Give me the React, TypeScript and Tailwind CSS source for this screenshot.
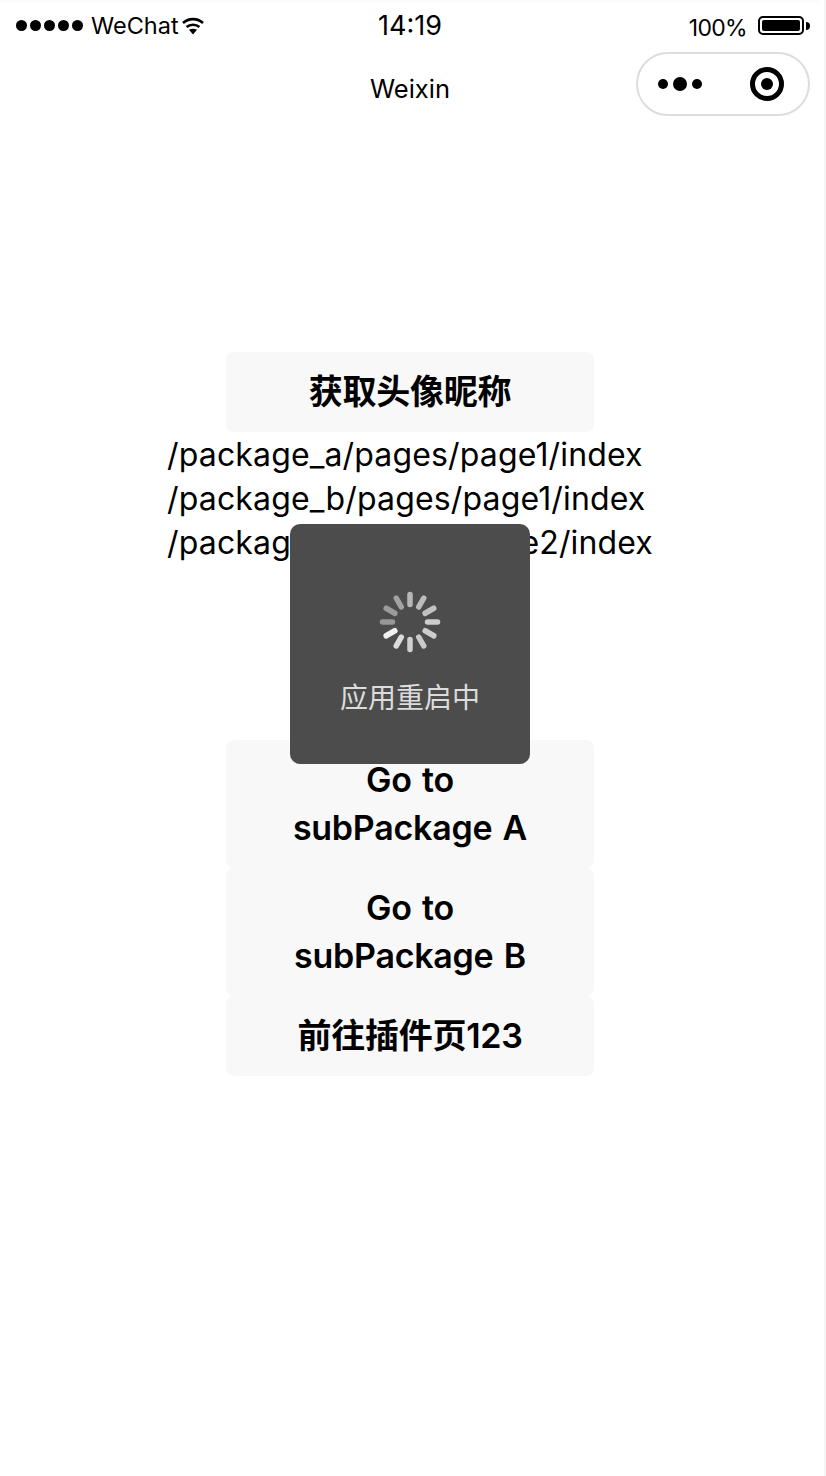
const cjk = "font-['Inter','Noto_Sans_CJK_SC',sans-serif]";

const ticks = [
  { a: 0, o: 0.6 },
  { a: 30, o: 0.62 },
  { a: 60, o: 0.66 },
  { a: 90, o: 0.72 },
  { a: 120, o: 0.72 },
  { a: 150, o: 0.7 },
  { a: 180, o: 0.74 },
  { a: 210, o: 0.8 },
  { a: 240, o: 0.92 },
  { a: 270, o: 0.42 },
  { a: 300, o: 0.44 },
  { a: 330, o: 0.48 },
];

const Spinner = () => (
  <svg width="62" height="62" viewBox="-31 -31 62 62">
    {ticks.map((t) => (
      <line
        key={t.a}
        x1="0"
        y1="-17.5"
        x2="0"
        y2="-27.5"
        stroke="#fff"
        strokeWidth="5.5"
        strokeLinecap="round"
        opacity={t.o}
        transform={`rotate(${t.a})`}
      />
    ))}
  </svg>
);

const WifiIcon = () => (
  <svg width="22" height="18" viewBox="0 0 22 18">
    <path d="M1 6C6.5 0.8 15.5 0.8 21 6" fill="none" stroke="#000" strokeWidth="2.6" />
    <path d="M4.6 10C8 6.9 14 6.9 17.4 10" fill="none" stroke="#000" strokeWidth="2.6" />
    <path d="M7 12.8C9.5 11.4 12.5 11.4 15 12.8L11 17.5Z" fill="#000" />
  </svg>
);

const Battery = () => (
  <div className="flex items-center gap-[2px]">
    <div className="h-[19px] w-[46px] rounded-[5px] border-2 border-black p-[2px]">
      <div className="h-full w-full rounded-[2px] bg-black" />
    </div>
    <div className="h-[8px] w-[4px] rounded-r-full bg-black" />
  </div>
);

const PageButton = ({ children }: { children: React.ReactNode }) => (
  <button className="w-[368px] rounded-[8px] bg-[#f8f8f8] py-[16px] text-center text-[34px] leading-[48px] font-semibold tracking-[-0.25px] text-black [word-spacing:2px]">
    {children}
  </button>
);

const App = () => {
  return (
    <div className={`relative h-[1476px] w-[826px] overflow-hidden bg-white text-black ${cjk}`}>
      <div className="h-full w-[820px] border-t-[3px] border-[#fbfbfb]">
        {/* status bar */}
        <div className="grid h-[45px] grid-cols-3 items-center px-[10px]">
          <div className="flex items-center pl-[6px]">
            <div className="flex gap-[3px]">
              {[0, 1, 2, 3, 4].map((d) => (
                <span key={d} className="h-[11px] w-[11px] rounded-full bg-black" />
              ))}
            </div>
            <span className="ml-[8px] text-[23.5px] leading-[28px]">WeChat</span>
            <span className="ml-[3px]"><WifiIcon /></span>
          </div>
          <div className="text-center text-[27px] leading-[30px]">14:19</div>
          <div className="flex items-center justify-end gap-[11px]">
            <span className="mt-[4px] text-[23px] leading-[28px] tracking-[-0.7px]">100%</span>
            <Battery />
          </div>
        </div>

        {/* nav bar */}
        <div className="relative flex h-[81px] items-center justify-center">
          <span className="text-[25.5px] leading-[32px]">Weixin</span>
          <div className="absolute top-[4px] right-[10px] flex h-[64px] w-[174px] items-center rounded-full border-2 border-[#dddddd] pl-[20px]">
            <div className="flex items-center gap-[5px]">
              <span className="h-[10px] w-[10px] rounded-full bg-black" />
              <span className="h-[14px] w-[14px] rounded-full bg-black" />
              <span className="h-[10px] w-[10px] rounded-full bg-black" />
            </div>
            <div className="ml-[48px] flex h-[34px] w-[34px] items-center justify-center rounded-full border-[5px] border-black">
              <span className="h-[12px] w-[12px] rounded-full bg-black" />
            </div>
          </div>
        </div>

        {/* page */}
        <div className="flex flex-col items-center pt-[223px]">
          <PageButton>获取头像昵称</PageButton>
          <div className="pt-[1px] text-left text-[32px] leading-[44px] tracking-[0.15px]">
            <div>/package_a/pages/page1/index</div>
            <div>/package_b/pages/page1/index</div>
            <div>/package_b/pages/page2/index</div>
          </div>
          <div className="mt-[175px] flex flex-col items-center">
            <PageButton>Go to<br />subPackage A</PageButton>
            <PageButton>Go to<br />subPackage B</PageButton>
            <PageButton>前往插件页123</PageButton>
          </div>
        </div>
      </div>

      {/* right edge */}
      <div className="absolute top-0 right-0 h-full w-[2px] bg-[#f5f5f5]" />

      {/* toast */}
      <div className="absolute top-[524px] left-[290px] flex h-[240px] w-[240px] flex-col items-center rounded-[10px] bg-[#4c4c4c] pt-[67px]">
        <Spinner />
        <div className="mt-[25px] text-[28px] leading-[40px] text-[#dcdcdc]">应用重启中</div>
      </div>
    </div>
  );
};

export default App;
